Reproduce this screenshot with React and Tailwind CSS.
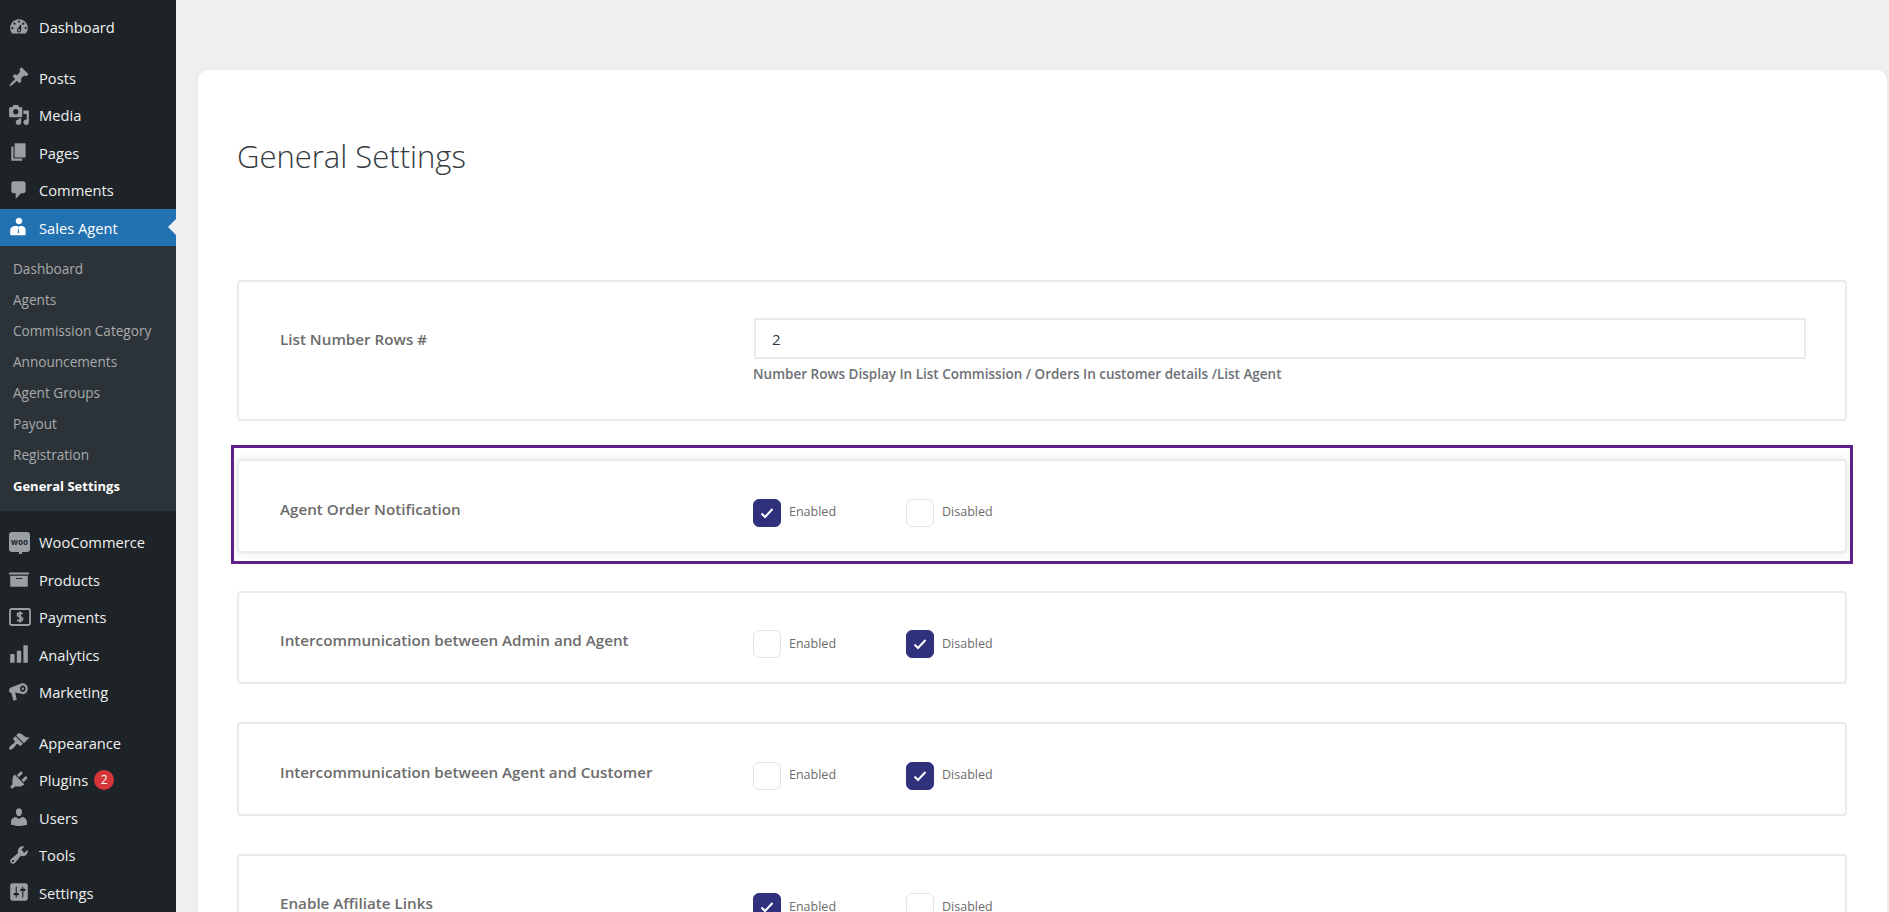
import React from 'react'

const ICONS = {
  dashboard: 'M3.76 16h12.48c1.1-1.37 1.76-3.11 1.76-5 0-4.42-3.58-8-8-8s-8 3.58-8 8c0 1.89.66 3.63 1.76 5zM10 4c.55 0 1 .45 1 1s-.45 1-1 1-1-.45-1-1 .45-1 1-1zM6 6c.55 0 1 .45 1 1s-.45 1-1 1-1-.45-1-1 .45-1 1-1zm8 0c.55 0 1 .45 1 1s-.45 1-1 1-1-.45-1-1 .45-1 1-1zm-5.37 5.55L12 7v6c0 1.1-.9 2-2 2s-2-.9-2-2c0-.57.24-1.08.63-1.45zM4 10c.55 0 1 .45 1 1s-.45 1-1 1-1-.45-1-1 .45-1 1-1zm12 0c.55 0 1 .45 1 1s-.45 1-1 1-1-.45-1-1 .45-1 1-1zm-5 3c0-.55-.45-1-1-1s-1 .45-1 1 .45 1 1 1 1-.45 1-1z',
  posts: 'M10.44 3.02l1.82-1.82 6.36 6.35-1.83 1.82c-1.05-.68-2.48-.57-3.41.36l-.75.75c-.92.93-1.04 2.35-.35 3.41l-1.83 1.82-2.41-2.41-2.8 2.79c-.42.42-3.38 2.71-3.8 2.29s1.86-3.39 2.28-3.81l2.79-2.79L4.1 9.36l1.83-1.82c1.05.69 2.48.57 3.41-.36l.75-.75c.93-.92 1.05-2.35.35-3.41z',
  media: 'M13 11V4c0-.55-.45-1-1-1h-1.67L9 1H5L3.67 3H2c-.55 0-1 .45-1 1v7c0 .55.45 1 1 1h10c.55 0 1-.45 1-1zM7 4.5c1.38 0 2.5 1.12 2.5 2.5S8.38 9.5 7 9.5 4.5 8.38 4.5 7 5.62 4.5 7 4.5zM14 6h5v10.5c0 1.38-1.12 2.5-2.5 2.5S14 17.88 14 16.5s1.12-2.5 2.5-2.5c.17 0 .34.02.5.05V9h-3V6zm-4 8.05V13h2v3.5c0 1.38-1.12 2.5-2.5 2.5S7 17.88 7 16.5 8.12 14 9.5 14c.17 0 .34.02.5.05z',
  pages: 'M6 15V2h10v13H6zm-1 1h8v2H3V5h2v11z',
  comments: 'M5 2h9c1.1 0 2 .9 2 2v7c0 1.1-.9 2-2 2h-2l-5 5v-5H5c-1.1 0-2-.9-2-2V4c0-1.1.9-2 2-2z',
  agent: 'M10 1.5c1.7 0 3 1.3 3 3s-1.3 3-3 3-3-1.300-3-3 1.300-3 3-3zM6.500 9h2.200l.8 1.200-.7 5.300h1.400l-.7-5.300.8-1.200h2.200c2 0 3.500 1.600 3.500 3.500v4c0 .6-.4 1-1 1H3c-.6 0-1-.4-1-1v-4C2 10.600 4.500 9 6.500 9z',
  products: 'M19 4v2H1V4h18zM2 7h16v10H2V7zm11 3V9H7v1h6z',
  analytics: 'M18 18V2h-4v16h4zm-6 0V7H8v11h4zm-6 0v-8H2v8h4z',
  marketing: 'M13.500 2c2.500 0 4.500 2.200 4.500 5s-2 5-4.500 5c-.5 0-1-.1-1.500-.3L6.500 10.500l1.500 6.500-3 1-2-7C1.800 11 1 10 1 8.500S2 6 3.200 5.700L12 2.300c.5-.2 1-.3 1.500-.3zm0 2C12.100 4 11 5.300 11 7s1.100 3 2.500 3S16 8.700 16 7s-1.100-3-2.500-3zm0 1.800c.6 0 1 .5 1 1.200s-.4 1.200-1 1.200-1-.5-1-1.200.4-1.200 1-1.200z',
  appearance: 'M14.480 11.060L7.410 3.990l1.500-1.500c.5-.56 2.300-.47 3.510.32 1.210.8 1.430 1.280 2.910 2.100 1.180.64 2.450 1.260 4.450.85zm-.71.71L6.700 4.700 4.930 6.470c-.39.39-.39 1.020 0 1.410l1.060 1.060c.39.39.39 1.030 0 1.420-.6.6-1.430 1.110-2.210 1.690-.35.26-.7.53-1.010.84-1.600 1.600-2.200 3.200-1.500 3.900s2.300.1 3.900-1.500c.31-.31.58-.66.84-1.010.58-.78 1.090-1.610 1.690-2.210.39-.39 1.030-.39 1.420 0l1.060 1.060c.39.39 1.020.39 1.410 0z',
  plugins: 'M13.110 4.360L9.870 7.600 8 5.730l3.240-3.240c.35-.34 1.050-.2 1.560.32.52.51.66 1.210.31 1.550zm-8 1.770l.91-1.120 9.010 9.010-1.190.84c-.71.71-2.630 1.160-3.820 1.160H6.140L4.900 17.260c-.59.59-1.540.59-2.120 0-.59-.58-.59-1.530 0-2.120l1.240-1.240v-3.880c0-1.130.4-3.190 1.090-3.890zm7.260 3.970l3.240-3.240c.34-.35 1.040-.21 1.550.31.52.51.66 1.210.31 1.550l-3.240 3.250z',
  users: 'M10 9.250c-2.270 0-2.730-3.440-2.730-3.440C7 4.020 7.820 2 9.970 2c2.160 0 2.980 2.020 2.710 3.810 0 0-.41 3.440-2.680 3.440zm0 2.570L12.720 10c2.390 0 4.520 2.330 4.520 4.530v2.490s-3.650 1.130-7.240 1.130c-3.650 0-7.240-1.130-7.240-1.130v-2.490c0-2.250 1.940-4.480 4.470-4.480z',
  tools: 'M16.680 9.770c-1.340 1.340-3.300 1.670-4.950.99l-5.410 6.520c-.99.99-2.590.99-3.580 0s-.99-2.590 0-3.570l6.520-5.420c-.68-1.650-.35-3.610.99-4.950 1.280-1.280 3.120-1.620 4.720-1.060l-2.890 2.890 2.820 2.820 2.860-2.870c.53 1.580.18 3.390-1.080 4.670zM3.810 16.210c.4.39 1.040.39 1.430 0 .4-.4.4-1.040 0-1.430-.39-.4-1.030-.4-1.430 0-.39.39-.39 1.030 0 1.430z',
  settings: 'M18 16V4c0-1.100-.9-2-2-2H4c-1.100 0-2 .9-2 2v12c0 1.100.9 2 2 2h12c1.100 0 2-.9 2-2zM8 11h1c.55 0 1 .45 1 1s-.45 1-1 1H8v1.500c0 .28-.22.5-.5.5s-.5-.22-.5-.5V13H6c-.55 0-1-.45-1-1s.45-1 1-1h1V5.500c0-.28.22-.5.5-.5s.5.22.5.5V11zm5-2h-1c-.55 0-1-.45-1-1s.45-1 1-1h1V5.500c0-.28.22-.5.5-.5s.5.22.5.5V7h1c.55 0 1 .45 1 1s-.45 1-1 1h-1v5.500c0 .28-.22.5-.5.5s-.5-.22-.5-.5V9z',
}

const SUBMENU = ['Dashboard', 'Agents', 'Commission Category', 'Announcements', 'Agent Groups', 'Payout', 'Registration', 'General Settings']

function MenuIcon({ name, active }) {
  const color = active ? 'text-white' : 'text-[#9a9fa4]'
  if (name === 'woo') {
    return (
      <span className="relative ml-[1px] flex h-[20px] w-[21px] items-center justify-center rounded-[3px] bg-[#9a9fa4] text-[8px] leading-none font-bold text-[#1d2327]">
        woo
        <span className="absolute -bottom-[2px] left-[10px] h-[4px] w-[3px] bg-[#9a9fa4]" />
      </span>
    )
  }
  if (name === 'payments') {
    return (
      <svg viewBox="0 0 22 18" className="ml-[1px] h-[18px] w-[22px] text-[#9a9fa4]" fill="none" stroke="currentColor">
        <rect x="1" y="1" width="20" height="16" rx="1.500" strokeWidth="1.800" />
        <path d="M13.500 6.200c-.4-.8-1.300-1.200-2.500-1.200-1.400 0-2.500.7-2.500 1.900 0 2.500 5 1.300 5 3.900 0 1.300-1.100 2.200-2.500 2.200-1.300 0-2.300-.5-2.700-1.400M11 3.500v11" strokeWidth="1.800" />
      </svg>
    )
  }
  return (
    <svg viewBox="0 0 20 20" className={`h-[22px] w-[22px] ${color}`} fill="currentColor">
      <path d={ICONS[name]} fillRule="evenodd" />
    </svg>
  )
}

function MenuItem({ icon, label, active, badge }) {
  return (
    <div className={`flex h-[37.500px] items-center pl-[8px] text-[14.700px] ${active ? 'relative bg-[#2271b1] text-white' : 'text-[#f0f0f1]'}`}>
      <span className="flex w-[31px] shrink-0 items-center justify-start">
        <MenuIcon name={icon} active={active} />
      </span>
      <span className="pt-[1px]">{label}</span>
      {badge && (
        <span className="ml-[6px] flex h-[20px] w-[20px] items-center justify-center rounded-full bg-[#d63638] text-[12px] text-white">{badge}</span>
      )}
      {active && (
        <span className="absolute top-1/2 right-0 h-0 w-0 -translate-y-1/2 border-y-[8px] border-r-[8px] border-y-transparent border-r-[#f0f0f1]" />
      )}
    </div>
  )
}

function Choice({ label, checked }) {
  return (
    <div className="flex items-center">
      <span className={`flex h-[28px] w-[28px] items-center justify-center rounded-[6px] border ${checked ? 'border-[#2f317c] bg-[#2f317c]' : 'border-[#dfe3ec] bg-white'}`}>
        {checked && (
          <svg viewBox="0 0 14 14" className="h-[14px] w-[14px]" fill="none" stroke="white" strokeWidth="2">
            <path d="M1.500 7.500l3.500 3.500 7.500-8" />
          </svg>
        )}
      </span>
      <span className="ml-[8px] text-[12.500px] text-[#6b6b6b]">{label}</span>
    </div>
  )
}

function ToggleRow({ label, enabled, highlighted, className = '' }) {
  return (
    <div className={`relative h-[93.500px] rounded-[4px] border-2 border-[#ebebeb] bg-white ${highlighted ? 'shadow-[0_0_12px_rgba(0,0,0,0.09)]' : ''} ${className}`}>
      <div className="flex h-full items-center pl-[41px]">
        <div className="w-[473px] shrink-0 pt-[7px] text-[15.200px] font-semibold text-[#6b6b6b]">{label}</div>
        <div className="w-[153px] pt-[14px]"><Choice label="Enabled" checked={enabled} /></div>
        <div className="pt-[14px]"><Choice label="Disabled" checked={!enabled} /></div>
      </div>
      {highlighted && <div className="absolute -top-[16px] -right-[8px] -bottom-[13px] -left-[8px] border-[3px] border-[#5f2189]" />}
    </div>
  )
}

export default function App() {
  return (
    <div className="flex h-[912px] w-full overflow-hidden bg-[#efefef] font-['Open_Sans',sans-serif]">
      <aside className="w-[176px] shrink-0 bg-[#1d2327]">
        <div className="pt-[8px] pb-[13px]"><MenuItem icon="dashboard" label="Dashboard" /></div>
        <MenuItem icon="posts" label="Posts" />
        <MenuItem icon="media" label="Media" />
        <MenuItem icon="pages" label="Pages" />
        <MenuItem icon="comments" label="Comments" />
        <MenuItem icon="agent" label="Sales Agent" active />
        <div className="bg-[#2c3338] pt-[8px] pb-[9px]">
          {SUBMENU.map((item) => (
            <div key={item} className={`flex h-[31px] items-center pl-[13px] ${item === 'General Settings' ? 'text-[13px] font-bold text-white' : 'text-[13.600px] text-[#a7aaad]'}`}>{item}</div>
          ))}
        </div>
        <div className="pt-[12px] pb-[13px]">
          <MenuItem icon="woo" label="WooCommerce" />
          <MenuItem icon="products" label="Products" />
          <MenuItem icon="payments" label="Payments" />
          <MenuItem icon="analytics" label="Analytics" />
          <MenuItem icon="marketing" label="Marketing" />
        </div>
        <MenuItem icon="appearance" label="Appearance" />
        <MenuItem icon="plugins" label="Plugins" badge="2" />
        <MenuItem icon="users" label="Users" />
        <MenuItem icon="tools" label="Tools" />
        <MenuItem icon="settings" label="Settings" />
      </aside>

      <main className="flex-1 pt-[70px] pr-[2px] pl-[22px]">
        <div className="rounded-[10px] bg-white pt-[65px] pr-[40px] pb-[40px] pl-[39px] shadow-[0_0_10px_rgba(0,0,0,0.04)]">
          <h1 className="h-[145px] text-[31px] leading-[42px] font-light text-[#343a40]">General Settings</h1>

          <div className="flex h-[141px] rounded-[4px] border-2 border-[#ebebeb] pt-[36px] pl-[41px]">
            <div className="w-[473px] shrink-0 pt-[10px] text-[15.200px] font-semibold text-[#6b6b6b]">List Number Rows #</div>
            <div className="flex-1 pr-[39px]">
              <div className="ml-[1px] flex h-[41px] items-center border-2 border-[#ebebeb] pt-[1px] pl-[16px] text-[15px] text-[#32373c]">2</div>
              <div className="mt-[5px] text-[13.500px] font-semibold text-[#6c7075]">Number Rows Display In List Commission / Orders In customer details /List Agent</div>
            </div>
          </div>

          <ToggleRow className="mt-[38px]" label="Agent Order Notification" enabled highlighted />
          <ToggleRow className="mt-[38px]" label="Intercommunication between Admin and Agent" enabled={false} />
          <ToggleRow className="mt-[38px]" label="Intercommunication between Agent and Customer" enabled={false} />
          <ToggleRow className="mt-[38px]" label="Enable Affiliate Links" enabled />
        </div>
      </main>
    </div>
  )
}
